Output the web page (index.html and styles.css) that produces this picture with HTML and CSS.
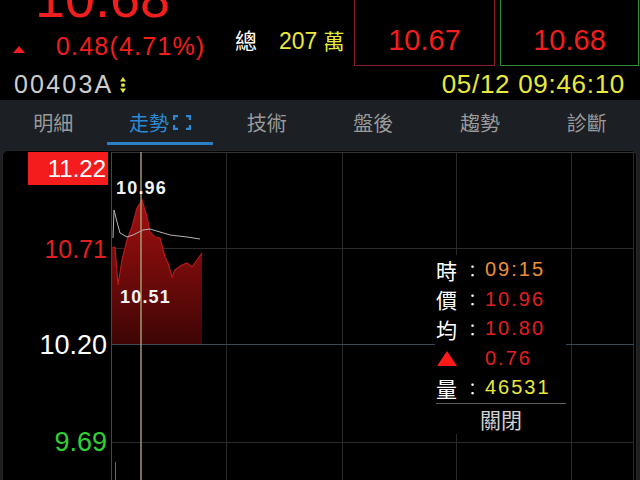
FILE: index.html
```html
<!DOCTYPE html>
<html lang="zh-Hant">
<head>
<meta charset="utf-8">
<link rel="stylesheet" href="styles.css">
</head>
<body>
<header class="quote">
  <div class="quote-top">
    <div class="last">
      <div class="last-price">10.68</div>
      <div class="change-row">
        <span class="up-tri"></span>
        <span class="change">0.48(4.71%)</span>
        <span class="vol-group">
          <span class="vol-label">總</span>
          <span class="vol">207</span>
          <span class="vol-unit">萬</span>
        </span>
      </div>
    </div>
    <div class="bidask bid"><span class="ba-label">買進</span><span class="ba-price">10.67</span></div>
    <div class="bidask ask"><span class="ba-label">賣出</span><span class="ba-price">10.68</span></div>
  </div>
  <div class="quote-bottom">
    <span class="code">00403A</span>
    <svg class="swap" width="6" height="16" viewBox="0 0 6 16"><path d="M3 0L6 4.5H0Z"/><rect x="1.2" y="6.4" width="3.6" height="3.4" rx="1"/><path d="M0 11.5H6L3 16Z"/></svg>
    <span class="time">05/12 09:46:10</span>
  </div>
</header>
<nav class="tabs">
  <div class="tab">明細</div>
  <div class="tab active">走勢<svg class="expand" width="18" height="15" viewBox="0 0 18 15"><path d="M1 5V1H5M13 1H17V5M17 10V14H13M5 14H1V10" fill="none" stroke="#2b8ad6" stroke-width="2.4"/></svg></div>
  <div class="tab">技術</div>
  <div class="tab">盤後</div>
  <div class="tab">趨勢</div>
  <div class="tab">診斷</div>
</nav>
<main class="chart-wrap">
  <section class="panel">
    <svg class="plot" width="633" height="329" viewBox="3 151 633 329">
      <defs>
        <linearGradient id="redfill" x1="0" y1="0" x2="0" y2="1">
          <stop offset="0" stop-color="#a30f0f"/>
          <stop offset="1" stop-color="#3e0505"/>
        </linearGradient>
      </defs>
      <g stroke="#2a2a2a" stroke-width="1">
        <line x1="226.5" y1="152" x2="226.5" y2="480"/>
        <line x1="342.5" y1="152" x2="342.5" y2="480"/>
        <line x1="456.5" y1="152" x2="456.5" y2="480"/>
        <line x1="571.5" y1="152" x2="571.5" y2="480"/>
        <line x1="633.5" y1="152" x2="633.5" y2="480"/>
        <line x1="111" y1="248.5" x2="634" y2="248.5"/>
        <line x1="111" y1="442.5" x2="634" y2="442.5"/>
        <line x1="111" y1="152.5" x2="634" y2="152.5" stroke="#333"/>
      </g>
      <line x1="111.5" y1="152" x2="111.5" y2="480" stroke="#444"/>
      <path d="M112 248L115 247L118 285L122 260L127 240L132 227L137 208L142 200L147 217L150 232L155 237L160 238L165 257L168 263L172 277L175 270L182 265L187 263L192 267L197 260L202 253L202 345L112 345Z" fill="url(#redfill)"/>
      <line x1="111" y1="344.5" x2="634" y2="344.5" stroke="#3c4a55"/>
      <polyline points="112,248 115,247 118,285 122,260 127,240 132,227 137,208 142,200 147,217 150,232 155,237 160,238 165,257 168,263 172,277 175,270 182,265 187,263 192,267 197,260 202,253" fill="none" stroke="#b81a1a" stroke-width="1.2"/>
      <polyline points="113,238 114,210 117,222 120,233 127,237 133,235 143,230 150,229 160,232 170,235 187,237 200,239" fill="none" stroke="#b5b5b5" stroke-width="1"/>
      <line x1="115.5" y1="462" x2="115.5" y2="480" stroke="#4a6d88"/>
      <line x1="141" y1="152" x2="141" y2="480" stroke="#a8a47a" stroke-width="1.4"/>
    </svg>
    <div class="price-box">11.22</div>
    <div class="axis ax-mid">10.71</div>
    <div class="axis ax-base">10.20</div>
    <div class="axis ax-low">9.69</div>
    <div class="mark mark-high">10.96</div>
    <div class="mark mark-low">10.51</div>
    <div class="tooltip">
      <div class="tt-rows">
        <div class="tt-row"><span class="tt-key">時</span><span class="tt-colon">：</span><span class="tt-val orange">09:15</span></div>
        <div class="tt-row"><span class="tt-key">價</span><span class="tt-colon">：</span><span class="tt-val red">10.96</span></div>
        <div class="tt-row"><span class="tt-key">均</span><span class="tt-colon">：</span><span class="tt-val red">10.80</span></div>
        <div class="tt-row"><span class="tt-key"><span class="tt-tri"></span></span><span class="tt-colon"></span><span class="tt-val red">0.76</span></div>
        <div class="tt-row"><span class="tt-key">量</span><span class="tt-colon">：</span><span class="tt-val yellow">46531</span></div>
      </div>
      <div class="tt-close">關閉</div>
    </div>
  </section>
</main>
</body>
</html>
```

FILE: styles.css
```css
* { box-sizing: border-box; margin: 0; padding: 0; }
html, body { background: #000; }
body {
  width: 640px;
  height: 480px;
  overflow: hidden;
  font-family: "Liberation Sans", "Noto Sans CJK TC", sans-serif;
  color: #fff;
}

/* quote header */
.quote { height: 100px; overflow: hidden; background: #000; }
.quote-top { display: flex; height: 96px; margin-top: -30px; }
.last { width: 354px; }
.last-price {
  height: 56px;
  padding-left: 35px;
  font-size: 54px;
  line-height: 56px;
  color: #f21d1d;
}
.change-row { display: flex; align-items: center; height: 40px; padding-top: 1px; }
.up-tri {
  margin-left: 13px;
  margin-top: 5px;
  width: 0; height: 0;
  border-left: 6px solid transparent;
  border-right: 6px solid transparent;
  border-bottom: 7px solid #f21d1d;
}
.change { margin-left: 31px; width: 149px; font-size: 25px; letter-spacing: 1.2px; color: #f21d1d; white-space: nowrap; }
.vol-group { display: flex; align-items: baseline; margin-left: 30px; margin-bottom: 16px; }
.vol-label { font-size: 22px; color: #fff; }
.vol { margin-left: 22px; font-size: 23px; color: #e9e93c; }
.vol-unit { margin-left: 6px; font-size: 21px; color: #e9e93c; }

.bidask { display: flex; flex-direction: column; align-items: center; height: 96px; border: 1px solid; }
.bid { width: 141px; border-color: #8a1e2a; }
.ask { width: 139px; margin-left: 5px; border-color: #2f8c37; }
.ba-label { margin-top: 7px; font-size: 20px; line-height: 24px; color: #fff; }
.ba-price { margin-top: 19px; font-size: 29px; line-height: 38px; color: #f21d1d; }

.quote-bottom { display: flex; align-items: center; height: 34px; padding: 3px 15px 0 14px; }
.code { font-size: 25px; letter-spacing: 2.2px; color: #cdcdcd; }
.swap { margin-left: 7px; fill: #e9e93c; }
.time { margin-left: auto; font-size: 26px; letter-spacing: 0.7px; color: #e9e93c; }

/* tabs */
.tabs {
  display: grid;
  grid-template-columns: repeat(6, 1fr);
  height: 47px;
  padding-bottom: 2px;
  background: #1c1f23;
}
.tab {
  display: flex;
  align-items: center;
  justify-content: center;
  gap: 4px;
  padding-top: 3px;
  font-family: "Noto Sans CJK TC", sans-serif;
  font-size: 20px;
  color: #9a9a9a;
  border-bottom: 3px solid transparent;
}
.tab.active { color: #2b8ad6; border-bottom-color: #2a80c4; }

/* chart */
.chart-wrap { height: 333px; padding: 3px 3px 0 2px; background: #1c1f23; }
.panel {
  position: relative;
  height: 100%;
  background: #000;
  border: 1px solid #262626;
  border-bottom: none;
  border-radius: 6px 6px 0 0;
  overflow: hidden;
}
.plot { position: absolute; left: 0; top: 0; display: block; }

.price-box {
  position: absolute;
  left: 25px; top: 1px;
  width: 80px; height: 33px;
  padding-right: 2px;
  background: #f41c1c;
  text-align: right;
  font-size: 24px;
  line-height: 33px;
  color: #fff;
}
.axis { position: absolute; left: 0; width: 104px; text-align: right; font-size: 25px; line-height: 30px; }
.ax-mid { top: 83px; color: #e31f1f; }
.ax-base { top: 179px; font-size: 27px; color: #fff; }
.ax-low { top: 276px; font-size: 27px; color: #31d031; }

.mark { position: absolute; font-size: 18px; font-weight: bold; letter-spacing: 1.2px; line-height: 20px; color: #f2f2f2; }
.mark-high { left: 113px; top: 27px; }
.mark-low { left: 117px; top: 136px; }

.tooltip {
  position: absolute;
  left: 432px; top: 104px;
  width: 131px;
  padding-left: 1px;
  background: #000;
}
.tt-rows { border-bottom: 1px solid #5c5c5c; }
.tt-row { display: flex; align-items: center; height: 29.5px; }
.tt-key { display: flex; align-items: center; width: 24px; font-family: "Noto Sans CJK TC", sans-serif; font-size: 21px; color: #fff; }
.tt-colon { width: 25px; text-align: center; font-family: "Noto Sans CJK TC", sans-serif; font-size: 16px; color: #fff; }
.tt-val { font-size: 20px; letter-spacing: 2px; }
.tt-tri {
  width: 0; height: 0;
  margin-left: 1px;
  border-left: 10.5px solid transparent;
  border-right: 10.5px solid transparent;
  border-bottom: 15px solid #ff1a1a;
}
.orange { color: #ec8f3a; }
.red { color: #e31f1f; }
.yellow { color: #e9e93c; }
.tt-close {
  height: 30px;
  text-align: center;
  font-family: "Noto Sans CJK TC", sans-serif;
  font-size: 21px;
  line-height: 30px;
  color: #d0d0d0;
}
```
